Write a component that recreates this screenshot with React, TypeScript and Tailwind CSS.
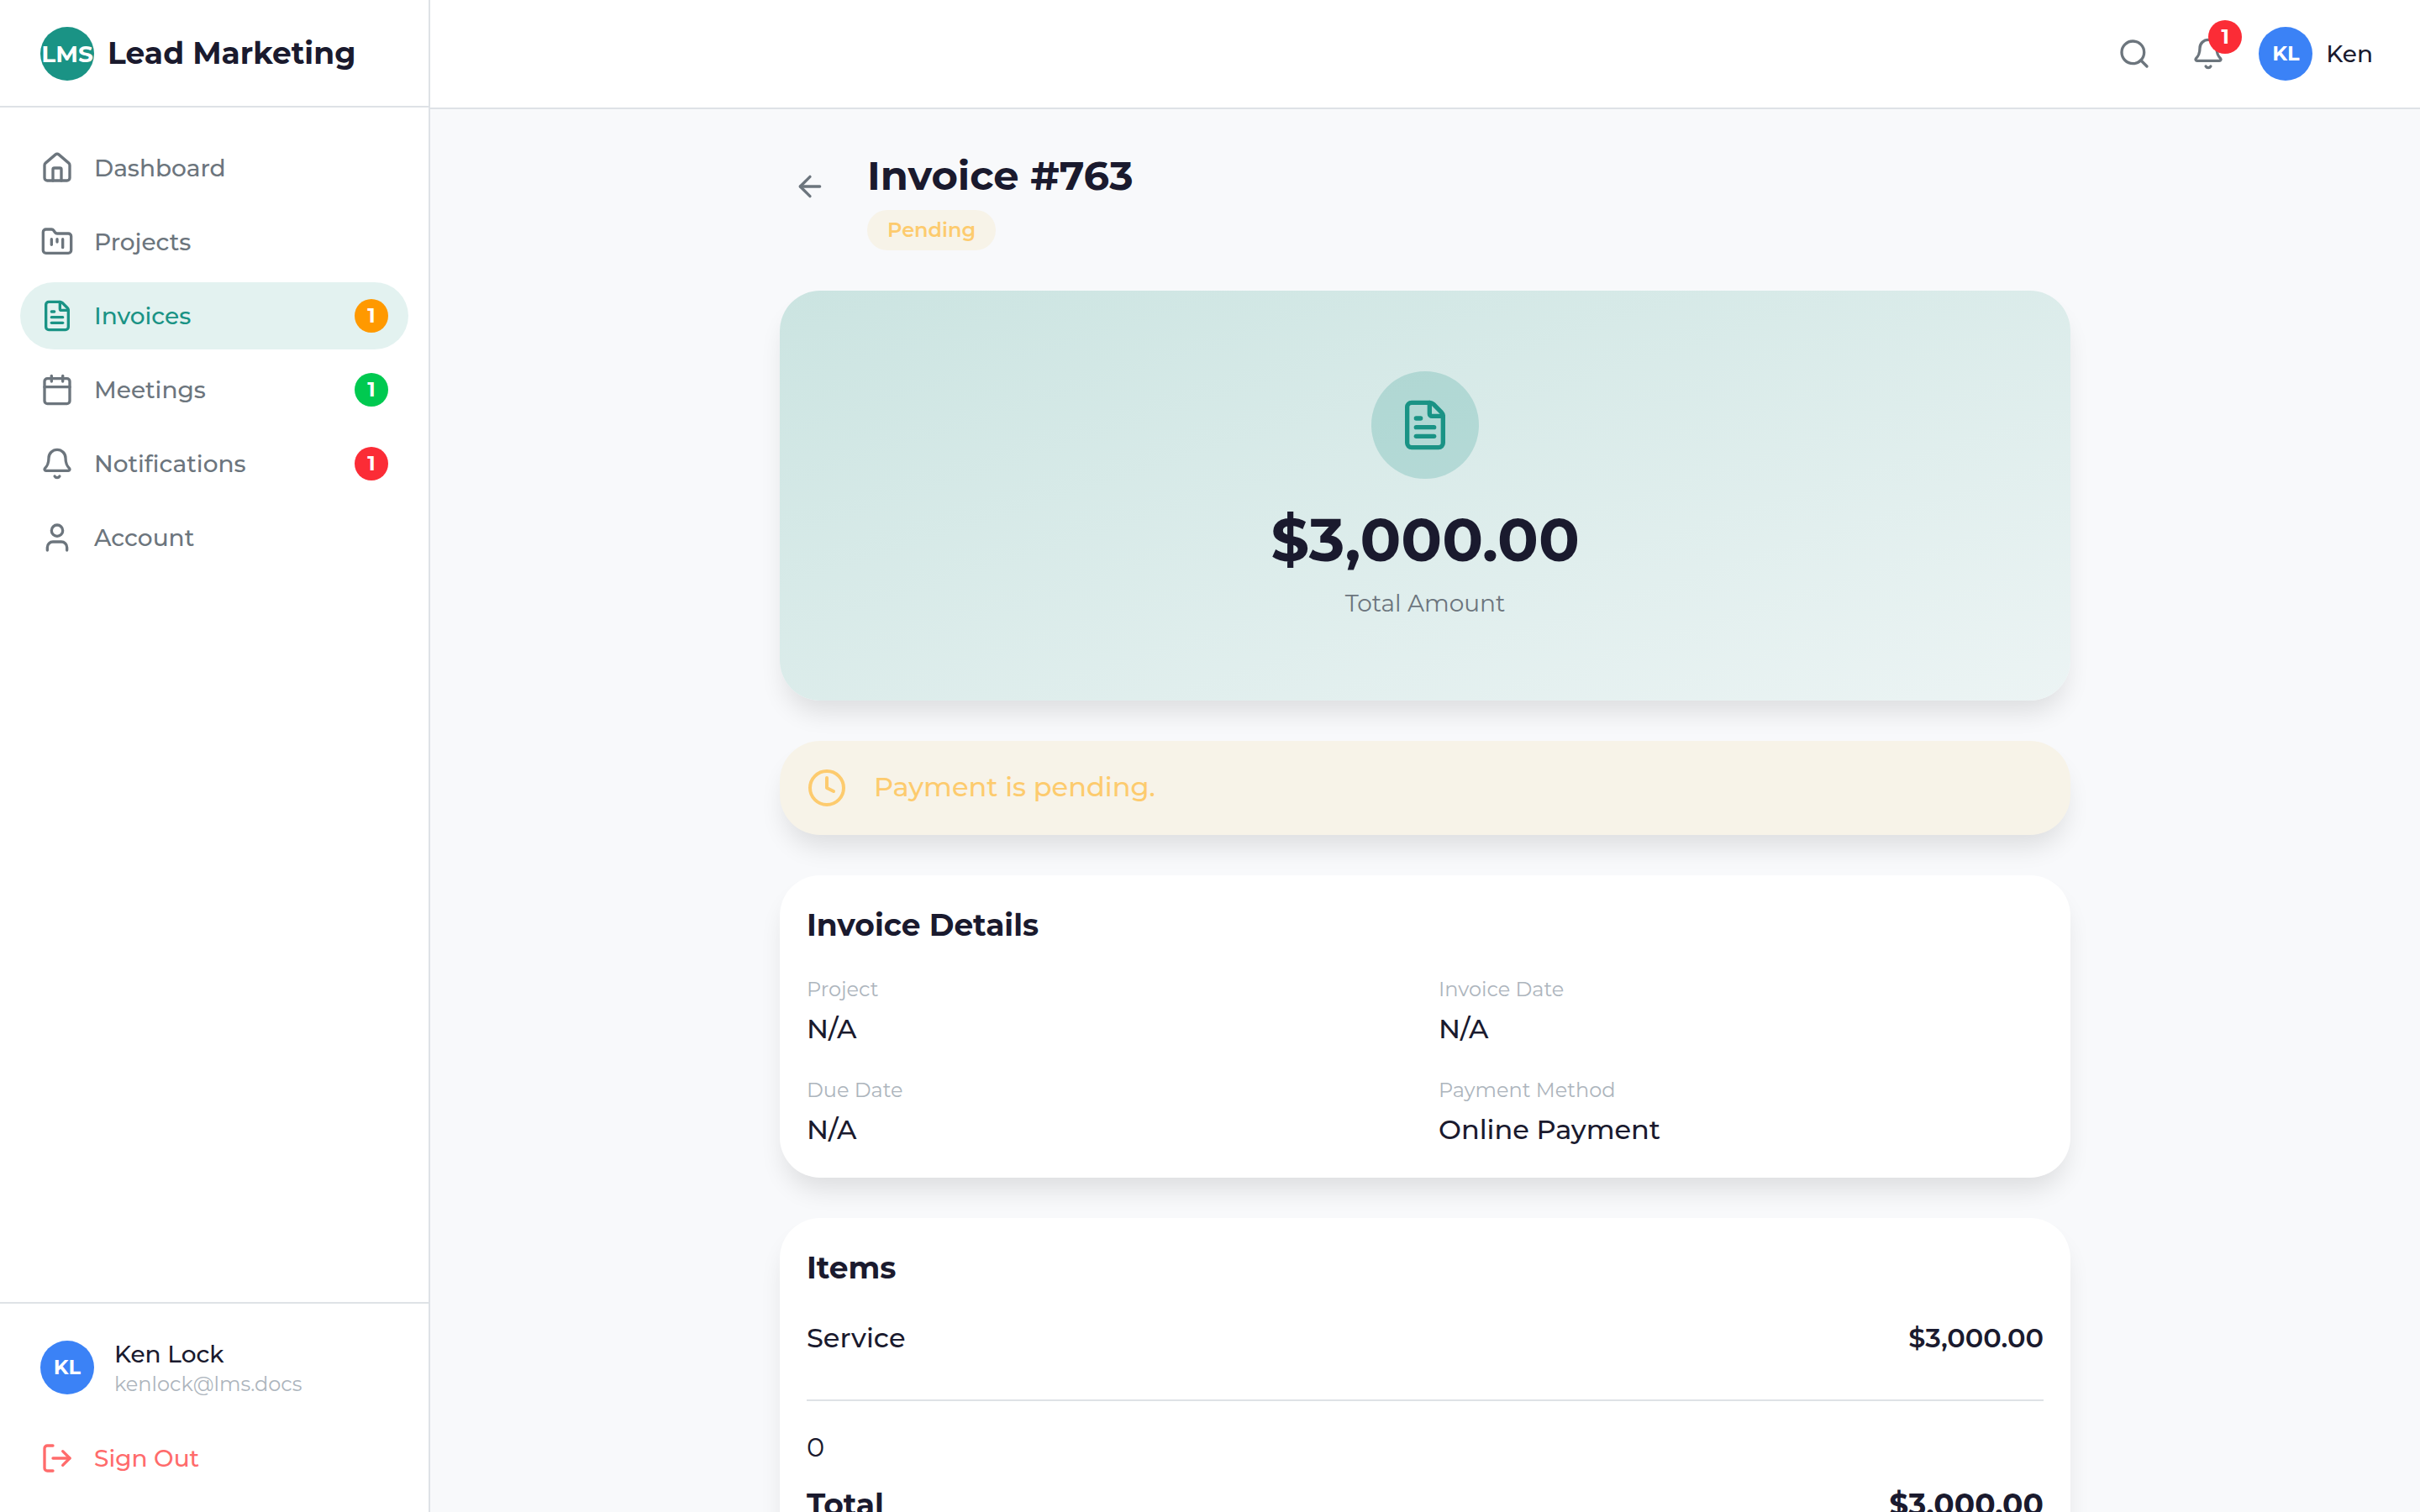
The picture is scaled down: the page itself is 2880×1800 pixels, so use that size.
import {
  ArrowLeft,
  Bell,
  Calendar,
  Clock,
  FileText,
  FolderKanban,
  House,
  LogOut,
  Search,
  User,
} from 'lucide-react'

const navItems = [
  { name: 'Dashboard', icon: House },
  { name: 'Projects', icon: FolderKanban },
  { name: 'Invoices', icon: FileText, badge: 1, badgeColor: 'bg-[#ff9900]', active: true },
  { name: 'Meetings', icon: Calendar, badge: 1, badgeColor: 'bg-[#00c950]' },
  { name: 'Notifications', icon: Bell, badge: 1, badgeColor: 'bg-[#fb2c36]' },
  { name: 'Account', icon: User },
]

const details = [
  { label: 'Project', value: 'N/A' },
  { label: 'Invoice Date', value: 'N/A' },
  { label: 'Due Date', value: 'N/A' },
  { label: 'Payment Method', value: 'Online Payment' },
]

const cardShadow = 'shadow-[0_20px_30px_-6px_rgba(0,0,0,0.11)]'

// type styles shared by the cards
const heading = 'pb-[2px] text-4xl leading-[54px] font-bold'
const body = 'pb-[3px] text-[32px] leading-[45px]'
const caption = 'pb-px text-2xl leading-[31px]'

const Avatar = () => (
  <div className="flex size-16 shrink-0 items-center justify-center rounded-full bg-[#3b82f6] pb-px text-2xl leading-[31px] font-bold text-white">
    KL
  </div>
)

const Sidebar = () => (
  <aside className="flex w-[512px] shrink-0 flex-col border-r-2 border-[#dee2e6] bg-white">
    <div className="flex h-32 shrink-0 items-center gap-4 border-b-2 border-[#dee2e6] px-12 pt-[2px]">
      <div className="flex size-16 shrink-0 items-center justify-center rounded-full bg-[#1a9385] text-[28px] leading-10 font-bold text-white">
        LMS
      </div>
      <span className={`whitespace-nowrap ${heading}`}>Lead Marketing</span>
    </div>

    <nav className="flex flex-1 flex-col gap-2 px-6 py-8">
      {navItems.map((item) => (
        <a
          key={item.name}
          className={`flex h-20 items-center gap-6 rounded-[40px] px-6 text-[28px] leading-10 font-medium ${
            item.active ? 'bg-[#1a9385]/12 text-[#1a9385]' : 'text-[#6c757d]'
          }`}
        >
          <item.icon className="size-10" />
          <span className="flex-1">{item.name}</span>
          {item.badge && (
            <span
              className={`flex size-10 items-center justify-center rounded-full pb-px text-2xl leading-[31px] font-bold text-white ${item.badgeColor}`}
            >
              {item.badge}
            </span>
          )}
        </a>
      ))}
    </nav>

    <div className="border-t-2 border-[#dee2e6] p-6">
      <div className="mb-4 flex items-center gap-6 px-6 py-4">
        <Avatar />
        <div>
          <p className="text-[28px] leading-10 font-medium">Ken Lock</p>
          <p className={`text-[#adb5bd] ${caption}`}>kenlock@lms.docs</p>
        </div>
      </div>
      <button className="flex h-20 w-full items-center gap-6 px-6 text-[28px] leading-10 font-medium text-[#ff6b6b]">
        <LogOut className="size-10" />
        Sign Out
      </button>
    </div>
  </aside>
)

const Header = () => (
  <header className="flex h-[130px] shrink-0 items-center justify-end gap-4 border-b-2 border-[#dee2e6] bg-white px-12">
    <button className="p-4 text-[#6c757d]">
      <Search className="size-10" />
    </button>
    <button className="relative p-4 text-[#6c757d]">
      <Bell className="size-10" />
      <span className="absolute -top-1 -right-1 flex size-10 items-center justify-center rounded-full bg-[#fb2c36] pb-px text-2xl leading-[31px] font-bold text-white">
        1
      </span>
    </button>
    <button className="flex items-center gap-4 px-2">
      <Avatar />
      <span className="text-[28px] leading-10 font-medium">Ken</span>
    </button>
  </header>
)

const App = () => {
  return (
    <div className="flex h-[1800px] overflow-hidden bg-[#f8f9fb] font-['Montserrat','Inter',sans-serif] text-[#1a1a2e]">
      <Sidebar />

      <div className="flex min-w-0 flex-1 flex-col">
        <Header />

        <main className="flex-1 overflow-hidden pt-12">
          <div className="mx-auto flex w-[1536px] flex-col gap-12">
            <div className="flex items-start gap-8">
              <button className="mt-2 p-4 text-[#6c757d]">
                <ArrowLeft className="size-10" />
              </button>
              <div className="flex flex-col items-start gap-2">
                <h1 className="pb-[2px] text-5xl leading-[62px] font-bold">Invoice #763</h1>
                <span className="flex h-12 items-center rounded-full bg-[#f7f3e8] px-6 pb-px text-2xl leading-[31px] font-semibold text-[#fdcb6e]">
                  Pending
                </span>
              </div>
            </div>

            <section
              className={`flex flex-col items-center rounded-[48px] bg-linear-to-br from-[#cbe4e1] to-[#ecf4f4] p-24 ${cardShadow}`}
            >
              <div className="mb-8 flex size-32 items-center justify-center rounded-full bg-[#1a9385]/20">
                <FileText className="size-16 text-[#1a9385]" />
              </div>
              <p className="mb-4 text-7xl leading-20 font-bold">$3,000.00</p>
              <p className="text-[28px] leading-10 text-[#6c757d]">Total Amount</p>
            </section>

            <section
              className={`flex items-center gap-8 rounded-[48px] bg-[#f7f3e8] p-8 text-[#fdcb6e] ${cardShadow}`}
            >
              <Clock className="size-12" />
              <p className={`font-medium ${body}`}>Payment is pending.</p>
            </section>

            <section className={`rounded-[48px] bg-white p-8 ${cardShadow}`}>
              <h2 className={`mb-8 ${heading}`}>Invoice Details</h2>
              <div className="grid grid-cols-2 gap-8">
                {details.map((detail) => (
                  <div key={detail.label}>
                    <p className={`mb-2 text-[#adb5bd] ${caption}`}>{detail.label}</p>
                    <p className={`font-medium ${body}`}>{detail.value}</p>
                  </div>
                ))}
              </div>
            </section>

            <section className={`rounded-[48px] bg-white p-8 ${cardShadow}`}>
              <h2 className={`mb-8 ${heading}`}>Items</h2>
              <div className={`mb-12 flex justify-between ${body}`}>
                <span className="font-medium">Service</span>
                <span className="font-semibold">$3,000.00</span>
              </div>
              <div className="border-t-2 border-[#dee2e6] pt-8">
                <p className={`mb-4 ${body}`}>0</p>
                <div className={`flex justify-between ${heading}`}>
                  <span>Total</span>
                  <span>$3,000.00</span>
                </div>
              </div>
            </section>
          </div>
        </main>
      </div>
    </div>
  )
}

export default App
